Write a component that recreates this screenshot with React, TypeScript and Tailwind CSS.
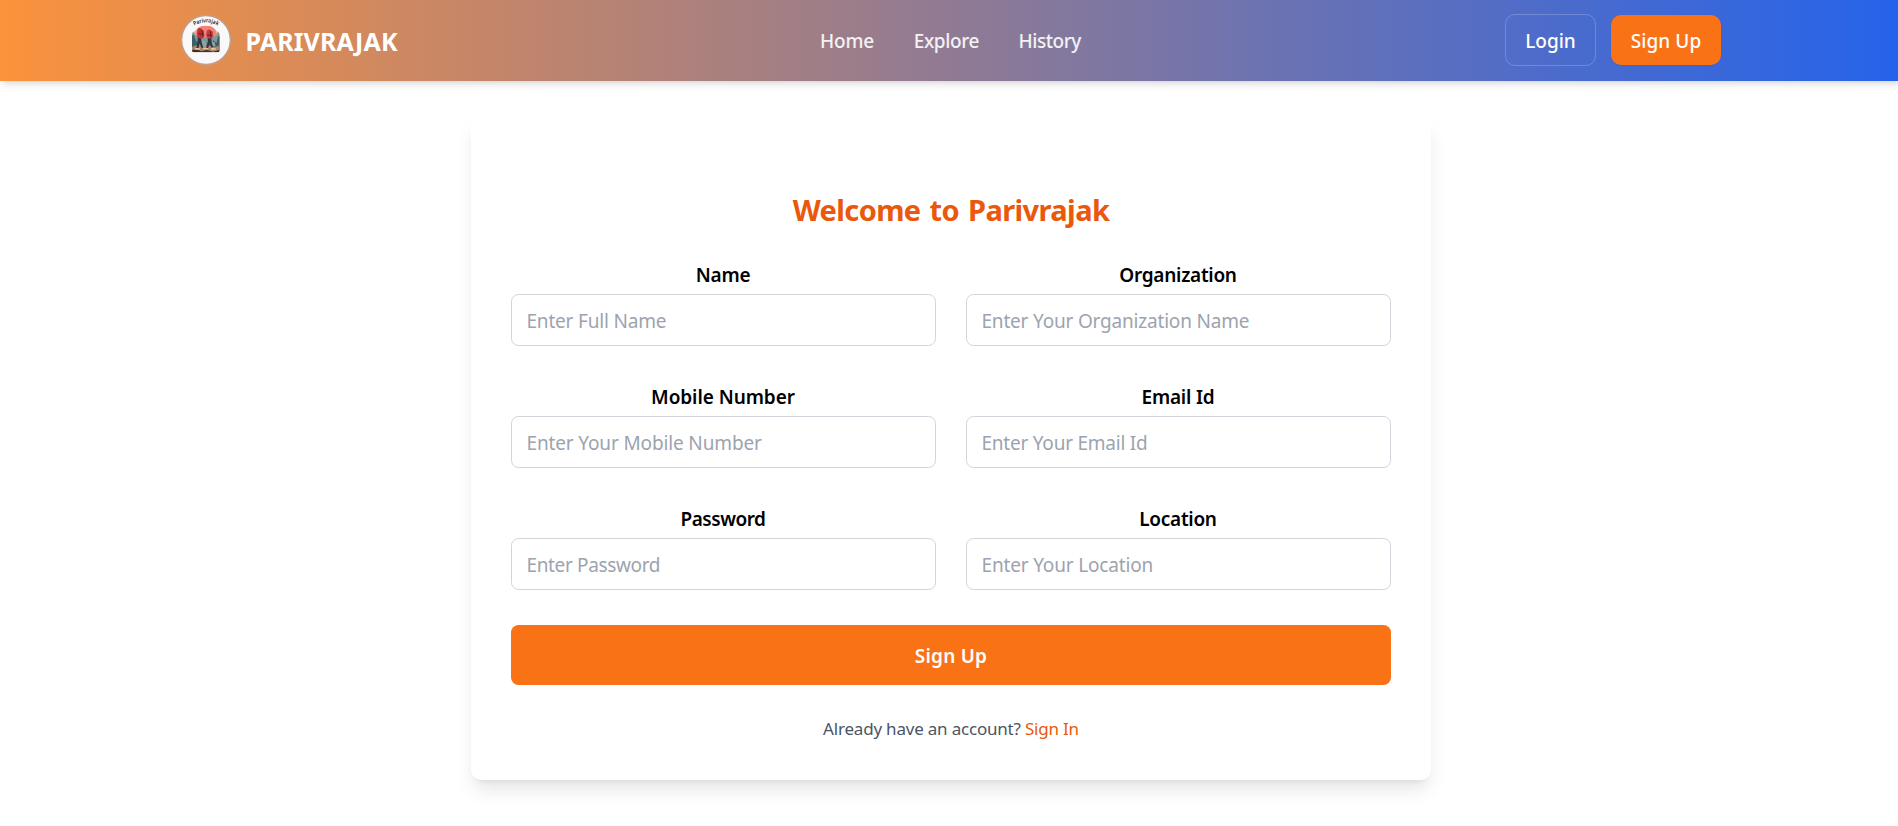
import React from "react";

type Field = { label: string; labelClass: string; placeholder: string; inputClass: string; type?: string };

const fields: Field[] = [
  { label: "Name", labelClass: "tracking-[-0.2px]", placeholder: "Enter Full Name", inputClass: "tracking-[-0.19px]" },
  { label: "Organization", labelClass: "tracking-[-0.28px]", placeholder: "Enter Your Organization Name", inputClass: "tracking-[-0.19px]" },
  { label: "Mobile Number", labelClass: "tracking-[-0.07px]", placeholder: "Enter Your Mobile Number", inputClass: "tracking-[-0.14px]" },
  { label: "Email Id", labelClass: "tracking-[-0.2px]", placeholder: "Enter Your Email Id", inputClass: "tracking-[-0.23px]" },
  { label: "Password", labelClass: "tracking-[-0.48px]", placeholder: "Enter Password", inputClass: "tracking-[-0.36px]", type: "password" },
  { label: "Location", labelClass: "tracking-[-0.28px]", placeholder: "Enter Your Location", inputClass: "tracking-[-0.16px]" },
];

function Logo() {
  return (
    <svg viewBox="0 0 150 150" className="mb-px size-[50px] shrink-0" aria-hidden="true">
      <defs>
        <path id="arc" d="M37 33 Q75 11 113 33" />
        <clipPath id="scene">
          <path d="M33 60 Q34 50 42 48 Q50 32 75 32 Q100 32 107 49 Q116 50 116 60 V106 Q116 112 110 112 H39 Q33 112 33 106 Z" />
        </clipPath>
      </defs>
      <circle cx="75" cy="75" r="73" fill="#f9f9f9" stroke="#bfa194" strokeWidth="4" />
      <text fontSize="17" fontWeight="600" fill="#222226" textAnchor="middle" className="font-['Noto_Sans']">
        <textPath href="#arc" startOffset="50%" textLength="74" lengthAdjust="spacingAndGlyphs">Parivrajak</textPath>
      </text>
      <g clipPath="url(#scene)">
        <rect x="30" y="30" width="90" height="90" fill="#e9b79c" />
        <circle cx="75" cy="62" r="32" fill="#f0827a" />
        <path d="M30 54 L38 50 L44 62 L52 58 L60 72 L72 66 L84 72 L96 60 L104 66 L110 52 L120 56 V100 H30 Z" fill="#7d9a99" />
        <path d="M30 66 L38 58 L46 80 L56 74 L66 88 L78 80 L88 90 L98 76 L106 84 L112 62 L120 66 V106 H30 Z" fill="#3f5f68" />
        <path d="M56 82 L66 76 L78 84 L74 96 H54 Z M92 82 L100 80 L104 94 H92 Z" fill="#8ea6a4" />
        <path d="M30 96 L48 90 L66 96 L84 91 L102 96 L120 90 V116 H30 Z" fill="#a98568" />
        <path d="M30 106 L48 103 L60 109 L78 105 L96 110 L120 103 V116 H30 Z" fill="#3a3030" />
        <path d="M42 99 h14 v5 h-14z M66 98 h16 v5 h-16z M90 99 h14 v5 h-14z" fill="#e3c39b" />
        <path d="M50 66 l10 0 l2 16 l5 16 h-6 l-5 -13 l-4 14 h-6 l4 -18z" fill="#2c3844" />
        <path d="M80 68 l11 0 l1 15 l5 14 h-6 l-5 -11 l-5 13 h-5 l5 -17z" fill="#2c3844" />
        <path d="M50 42 q5 -6 11 -1 l7 6 l2 16 q-3 9 -11 8 l-9 -3 q-4 -12 0 -26z" fill="#c22f32" />
        <path d="M78 47 q5 -6 11 -2 l7 6 l-1 14 q-3 8 -11 6 l-7 -4 q-3 -10 1 -20z" fill="#c83637" />
        <path d="M62 45 l5 19 M53 56 l13 3 M88 50 l2 17 M79 60 l14 2" stroke="#611f28" strokeWidth="3" />
      </g>
    </svg>
  );
}

function Header() {
  return (
    <header className="flex h-[81px] shrink-0 justify-center bg-[linear-gradient(to_right,#fb923c,#2563eb)] text-white shadow-[0_5px_7.5px_-1.25px_rgba(0,0,0,0.1),0_2.5px_5px_-2.5px_rgba(0,0,0,0.1)]">
      <div className="flex w-[1540px] items-center justify-between">
        <a href="#" className="flex w-[217px] items-center gap-[14.5px]">
          <Logo />
          <span className="pt-[2px] text-[25px] leading-[35px] font-bold tracking-[0.1px]">PARIVRAJAK</span>
        </a>
        <nav className="flex w-[263px] gap-10 text-[19px] leading-[30px] font-medium whitespace-nowrap text-white/90">
          <a href="#" className="w-[53.7px] shrink-0 tracking-[-0.2px]">Home</a>
          <a href="#" className="w-[64.8px] shrink-0 tracking-[-0.38px]">Explore</a>
          <a href="#" className="shrink-0 tracking-[-0.45px]">History</a>
        </nav>
        <div className="flex w-[216px] items-center justify-between pb-[2px] text-[19px] leading-[30px] font-medium">
          <button className="h-[52px] w-[91px] rounded-[10px] border border-white/20 pt-[2px]">Login</button>
          <button className="h-[50px] w-[110px] rounded-[10px] bg-[#f97316] pt-[2px] tracking-[0.1px] shadow-[0_1px_2.5px_rgba(0,0,0,0.05)]">Sign Up</button>
        </div>
      </div>
    </header>
  );
}

export default function App() {
  return (
    <div className="h-[826px] overflow-hidden bg-white font-['Noto_Sans','Open_Sans',sans-serif]">
      <div className="flex w-[1902px] flex-col">
        <Header />
        <main className="flex justify-center pt-[35px]">
          <form className="flex h-[664px] w-[960px] flex-col rounded-[10px] bg-white px-10 pt-[74px] shadow-[0_12.5px_18.75px_-3.75px_rgba(0,0,0,0.1),0_5px_7.5px_-5px_rgba(0,0,0,0.1)]">
            <h1 className="text-center text-[29px] leading-10 font-bold tracking-[-0.6px] text-[#ea580c] [word-spacing:2px]">Welcome to Parivrajak</h1>
            <div className="mt-[30px] grid grid-cols-2 gap-x-[30px] gap-y-[36px]">
              {fields.map((f) => (
                <label key={f.label} className="flex flex-col gap-1">
                  <span className={`pr-px text-center text-[19px] leading-[30px] font-semibold text-black ${f.labelClass}`}>{f.label}</span>
                  <input
                    type={f.type ?? "text"}
                    placeholder={f.placeholder}
                    className={`h-[52px] w-full rounded-[7.5px] border border-[#d1d5db] bg-white px-[14.5px] pt-[2px] text-[19px] text-black outline-none placeholder:text-[#9ca3af] ${f.inputClass}`}
                  />
                </label>
              ))}
            </div>
            <button type="button" className="mt-[35px] h-[60px] rounded-[7.5px] bg-[#f97316] pt-[2px] text-[19px] leading-[30px] font-semibold tracking-[0.2px] text-white">
              Sign Up
            </button>
            <p className="mt-[31px] text-center text-[17px] leading-[25px] tracking-[-0.2px] text-[#4b5563]">
              Already have an account?{" "}
              <a href="#" className="text-[#ea580c]">Sign In</a>
            </p>
          </form>
        </main>
      </div>
    </div>
  );
}
